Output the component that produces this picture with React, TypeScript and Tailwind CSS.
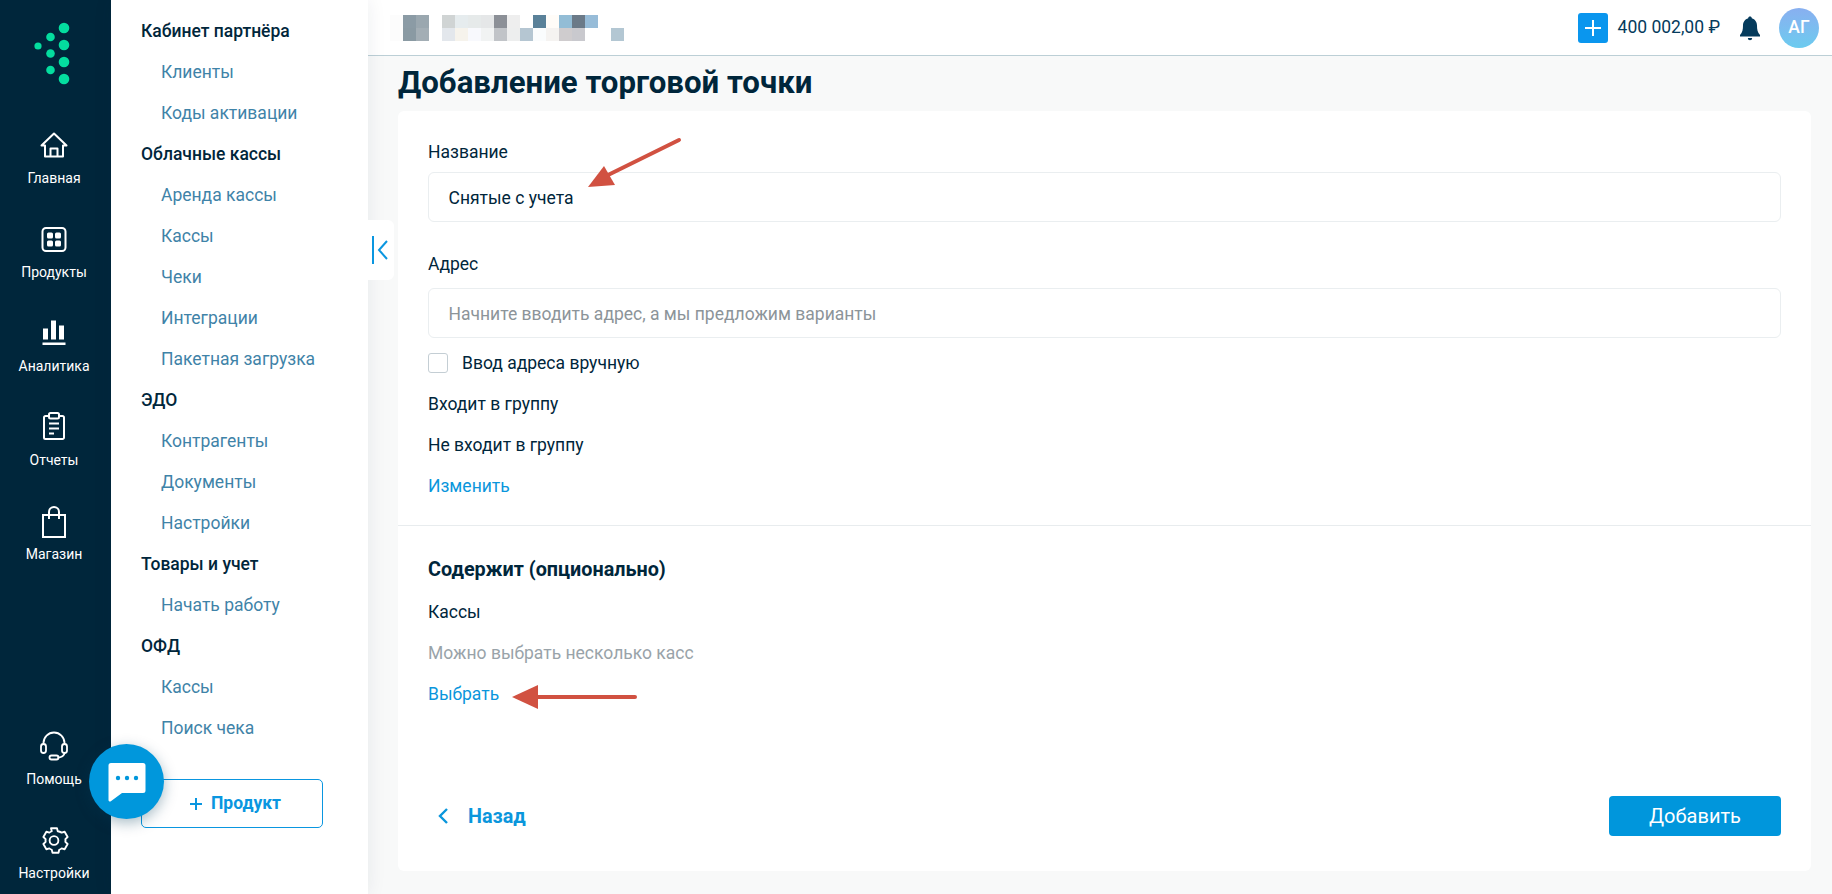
const topRow = [
  "bg-[#fcfcfc]", "bg-[#8b9ba5]", "bg-[#9aa7af]", "bg-white", "bg-[#d0d4d4]", "bg-[#e6ecee]", "bg-[#e6eaea]", "bg-[#e5e7e8]",
  "bg-[#8c9097]", "bg-[#eeeeee]", "bg-white", "bg-[#5a8199]", "bg-[#fffcf8]", "bg-[#93bdd6]", "bg-[#6b7a88]", "bg-[#97bcd8]",
  "bg-white", "bg-white",
];
const bottomRow = [
  "bg-[#fcfcfc]", "bg-[#8a9aa3]", "bg-[#a3aeb5]", "bg-white", "bg-[#e3e7ec]", "bg-[#f6f3ec]", "bg-[#f8f9fd]", "bg-[#f1f3f3]",
  "bg-[#c1c4c8]", "bg-[#edeeee]", "bg-[#b5c6d2]", "bg-[#fafcfd]", "bg-[#f5f3f1]", "bg-[#cfccce]", "bg-[#c9c9ce]", "bg-white",
  "bg-white", "bg-[#b3c7d3]",
];

const menu = [
  { title: "Кабинет партнёра", items: ["Клиенты", "Коды активации"] },
  { title: "Облачные кассы", items: ["Аренда кассы", "Кассы", "Чеки", "Интеграции", "Пакетная загрузка"] },
  { title: "ЭДО", items: ["Контрагенты", "Документы", "Настройки"] },
  { title: "Товары и учет", items: ["Начать работу"] },
  { title: "ОФД", items: ["Кассы", "Поиск чека"] },
];

const HomeIcon = () => (
  <svg width="30" height="30" viewBox="0 0 30 30" fill="none" stroke="white" strokeWidth="2" strokeLinejoin="round">
    <path d="M2.5 15.5 15 3.5l12.5 12h-3.5v11H6v-11z" />
    <path d="M11.5 26.5v-8h7v8" />
  </svg>
);

const ProductsIcon = () => (
  <svg width="30" height="30" viewBox="0 0 30 30" fill="none">
    <rect x="3.5" y="4" width="23" height="23" rx="3.5" stroke="white" strokeWidth="2" />
    <rect x="8" y="8.5" width="6" height="6" rx="1.5" fill="white" />
    <rect x="16" y="8.5" width="6" height="6" rx="1.5" fill="white" />
    <rect x="8" y="16.5" width="6" height="6" rx="1.5" fill="white" />
    <rect x="16" y="16.5" width="6" height="6" rx="1.5" fill="white" />
  </svg>
);

const AnalyticsIcon = () => (
  <svg width="30" height="30" viewBox="0 0 30 30" fill="white">
    <rect x="4" y="10.5" width="5" height="11" />
    <rect x="12" y="2.500" width="5" height="19" />
    <rect x="20" y="7.500" width="5" height="14" />
    <rect x="3.5" y="24.500" width="23" height="2.5" />
  </svg>
);

const ReportIcon = () => (
  <svg width="30" height="30" viewBox="0 0 30 30" fill="none" stroke="white" strokeWidth="2">
    <path d="M10 4H6.5a1.5 1.5 0 0 0-1.500 1.500v20a1.500 1.500 0 0 0 1.500 1.500h17a1.500 1.500 0 0 0 1.500-1.500v-20A1.500 1.500 0 0 0 23.500 4H20" />
    <rect x="10" y="1" width="10" height="5.500" rx="1.500" />
    <path d="M10 11.500h10M10 16.500h10M10 21.500h5" />
  </svg>
);

const BagIcon = () => (
  <svg width="30" height="34" viewBox="0 0 30 34" fill="none" stroke="white" strokeWidth="2">
    <rect x="4" y="11" width="22" height="22" />
    <path d="M10 15V8a5 5 0 0 1 10 0v7" />
  </svg>
);

const HelpIcon = () => (
  <svg width="30" height="30" viewBox="0 0 30 30" fill="none" stroke="white" strokeWidth="1.800">
    <path d="M4.500 14v-2a10.500 10.500 0 0 1 21 0v2" />
    <rect x="2" y="13" width="5" height="9" rx="2.500" />
    <rect x="23" y="13" width="5" height="9" rx="2.500" />
    <path d="M25.500 22c0 2.500-3 4.500-7 4.500" />
    <rect x="10.500" y="24.500" width="9" height="4" rx="2" />
  </svg>
);

const SettingsIcon = () => (
  <svg width="30" height="30" viewBox="0 0 24 24" fill="none" stroke="white" strokeWidth="1.500" strokeLinejoin="round">
    <path d="M9.600 2.600 10.200 5a7.300 7.300 0 0 0-1.900 1.100L5.900 5.400 3.500 9.600l1.800 1.700a7.300 7.300 0 0 0 0 2.200l-1.800 1.700 2.400 4.200 2.400-.7c.6.500 1.200.8 1.900 1.100l.6 2.400h4.800l.6-2.400c.7-.3 1.300-.6 1.900-1.100l2.400.7 2.400-4.200-1.800-1.700a7.300 7.300 0 0 0 0-2.200l1.800-1.700-2.400-4.200-2.400.7A7.300 7.300 0 0 0 15 5l-.6-2.400z" />
    <circle cx="12" cy="12.400" r="3.500" />
  </svg>
);

const RailItem = ({ icon, label }: { icon: React.ReactNode; label: string }) => (
  <div className="flex h-[70px] flex-col items-center pr-[3px]">
    <div className="flex h-[34px] items-center justify-center">{icon}</div>
    <div className="mt-[6px] text-center text-[14px] leading-[20px] text-white">{label}</div>
  </div>
);

export default function App() {
  return (
    <div className="relative flex h-[894px] w-[1832px] overflow-hidden bg-[#f8f9f9] font-['Roboto',sans-serif] text-[17.5px] text-[#00263b]">
      {/* left rail */}
      <aside className="flex h-full w-[111px] shrink-0 flex-col gap-[24px] bg-[#00263b] pb-[1px]">
        <div className="-mb-[24px] h-[128px]">
          <svg width="111" height="100" viewBox="0 0 111 100" fill="#04dd9f">
            <circle cx="64" cy="28" r="5.300" />
            <circle cx="50.500" cy="37" r="4.300" />
            <circle cx="38" cy="46" r="3.600" />
            <circle cx="64" cy="45" r="5.300" />
            <circle cx="50.500" cy="53.500" r="4.300" />
            <circle cx="64" cy="62" r="5.300" />
            <circle cx="50.500" cy="70" r="4.300" />
            <circle cx="64" cy="79" r="5.300" />
          </svg>
        </div>
        <RailItem icon={<HomeIcon />} label="Главная" />
        <RailItem icon={<ProductsIcon />} label="Продукты" />
        <RailItem icon={<AnalyticsIcon />} label="Аналитика" />
        <RailItem icon={<ReportIcon />} label="Отчеты" />
        <RailItem icon={<BagIcon />} label="Магазин" />
        <div className="mt-auto">
          <RailItem icon={<HelpIcon />} label="Помощь" />
        </div>
        <RailItem icon={<SettingsIcon />} label="Настройки" />
      </aside>

      {/* sub menu */}
      <nav className="z-10 h-full w-[257px] shrink-0 bg-white pl-[30px] pt-[11px] shadow-[0_0_18px_rgba(0,38,59,0.08)]">
        {menu.map((group) => (
          <div key={group.title}>
            <div className="flex h-[41px] items-center font-medium">{group.title}</div>
            {group.items.map((item) => (
              <div key={item} className="flex h-[41px] items-center pl-[20px] text-[#3f83a8]">
                {item}
              </div>
            ))}
          </div>
        ))}
        <button className="mt-[30px] flex h-[49px] w-[182px] items-center justify-center gap-[9px] rounded-[5px] border border-[#0a96e0] pl-[7px] font-bold text-[#0a96e0]">
          <svg width="12" height="12" viewBox="0 0 12 12" stroke="#0a96e0" strokeWidth="2">
            <path d="M6 0v12M0 6h12" />
          </svg>
          Продукт
        </button>
      </nav>

      {/* main column */}
      <div className="flex h-full min-w-0 flex-1 flex-col">
        <header className="flex h-[56px] shrink-0 items-center border-b border-[#bccfd6] bg-white pl-[22px] pr-[13px]">
          <div className="flex flex-col">
            <div className="flex">
              {topRow.map((c, i) => (
                <div key={i} className={`h-[13px] w-[13px] ${c}`} />
              ))}
            </div>
            <div className="flex">
              {bottomRow.map((c, i) => (
                <div key={i} className={`h-[13px] w-[13px] ${c}`} />
              ))}
            </div>
          </div>
          <div className="ml-auto flex items-center">
            <div className="flex h-[30px] w-[30px] items-center justify-center rounded-[3px] bg-[#0a96ee]">
              <svg width="16" height="16" viewBox="0 0 16 16" stroke="white" strokeWidth="2">
                <path d="M8 0v16M0 8h16" />
              </svg>
            </div>
            <div className="ml-[10px] text-[17.5px] text-[#053b5c]">400 002,00 ₽</div>
            <svg className="ml-[19px]" width="22" height="26" viewBox="0 0 22 26" fill="#053b5c">
              <path d="M11 1.500c1 0 1.800.700 1.800 1.700C16 4 18 7 18 10.500c0 4 .5 7 3 9.500v1.500H1V20c2.500-2.500 3-5.500 3-9.500C4 7 6 4 9.200 3.200 9.200 2.200 10 1.500 11 1.500z" />
              <path d="M8.800 23h4.400a2.200 2.200 0 0 1-4.400 0z" />
            </svg>
            <div className="ml-[18px] flex h-[40px] w-[40px] items-center justify-center rounded-full bg-gradient-to-b from-[#88aff0] to-[#6bcbef] font-medium text-white">
              АГ
            </div>
          </div>
        </header>

        <main className="flex min-h-0 flex-1 flex-col pb-[23px] pl-[30px] pr-[21px]">
          <h1 className="flex h-[55px] shrink-0 items-center text-[31.2px] font-bold">Добавление торговой точки</h1>
          <section className="flex flex-1 flex-col rounded-[6px] bg-white">
            <div className="px-[30px] pt-[29px]">
              <div className="leading-[24px]">Название</div>
              <div className="mt-[8px] flex h-[50px] items-center rounded-[6px] border border-[#eaeef0] pl-[19.500px] pr-[20px] pt-[2px]">Снятые с учета</div>
              <div className="mt-[30px] leading-[24px]">Адрес</div>
              <div className="mt-[12px] flex h-[50px] items-center rounded-[6px] border border-[#eaeef0] pl-[19.500px] pr-[20px] pt-[2px] text-[#8c9499]">
                Начните вводить адрес, а мы предложим варианты
              </div>
              <div className="mt-[4px] flex h-[42px] items-center gap-[14px]">
                <div className="h-[20px] w-[20px] rounded-[3px] border border-[#c4ced4] bg-white" />
                Ввод адреса вручную
              </div>
              <div className="flex h-[41px] items-center">Входит в группу</div>
              <div className="flex h-[41px] items-center">Не входит в группу</div>
              <div className="flex h-[41px] items-center text-[#0a96dc]">Изменить</div>
            </div>
            <div className="mt-[18px] h-px bg-[#e8ecee]" />
            <div className="flex flex-1 flex-col px-[30px] pb-[35px] pt-[31px]">
              <div className="text-[19.800px] font-bold leading-[26px]">Содержит (опционально)</div>
              <div className="mt-[9px] flex h-[41px] items-center">Кассы</div>
              <div className="flex h-[41px] items-center text-[#99a3a9]">Можно выбрать несколько касс</div>
              <div className="flex h-[41px] items-center text-[#0a96dc]">Выбрать</div>
              <div className="mt-auto flex items-center justify-between">
                <div className="flex items-center pl-[9px] text-[19.800px] font-bold text-[#0a96dc]">
                  <svg width="12" height="18" viewBox="0 0 12 18" fill="none" stroke="#0a96dc" strokeWidth="2.400">
                    <path d="M10 2 3 9l7 7" />
                  </svg>
                  <span className="ml-[19px] pt-[2px]">Назад</span>
                </div>
                <button className="flex h-[40px] w-[172px] items-center justify-center rounded-[4px] bg-[#0096dc] text-[20px] text-white">
                  Добавить
                </button>
              </div>
            </div>
          </section>
        </main>
      </div>

      {/* sidebar collapse tab */}
      <div className="absolute left-[368px] top-[220px] z-20 flex h-[60px] w-[26px] items-center justify-center rounded-r-[6px] bg-white">
        <svg width="18" height="30" viewBox="0 0 18 30" fill="none" stroke="#0a96e0" strokeWidth="2">
          <path d="M1 1v28M15 6l-8 9 8 9" />
        </svg>
      </div>

      {/* chat widget */}
      <div className="absolute left-[89px] top-[744px] z-30 flex h-[75px] w-[75px] items-center justify-center rounded-full bg-[#0097dc] shadow-[0_4px_14px_rgba(0,60,90,0.35)]">
        <svg width="38" height="40" viewBox="0 0 38 40">
          <path d="M3 1h32a2.500 2.500 0 0 1 2.500 2.500v25A2.500 2.500 0 0 1 35 31H14L2.500 39.500A1.500 1.500 0 0 1 .5 38V3.500A2.500 2.500 0 0 1 3 1z" fill="white" />
          <circle cx="10" cy="16" r="2.200" fill="#0097dc" />
          <circle cx="19" cy="16" r="2.200" fill="#0097dc" />
          <circle cx="28" cy="16" r="2.200" fill="#0097dc" />
        </svg>
      </div>

      {/* annotation arrows */}
      <svg className="pointer-events-none absolute left-0 top-0 z-40" width="1832" height="894" fill="#d15141" stroke="none">
        <path d="M679 140 606 176" stroke="#d15141" strokeWidth="4" strokeLinecap="round" />
        <path d="M588 187 604 166 615 185z" />
        <path d="M635 697H530" stroke="#d15141" strokeWidth="4" strokeLinecap="round" />
        <path d="M512 697 538 685V709z" />
      </svg>
    </div>
  );
}
